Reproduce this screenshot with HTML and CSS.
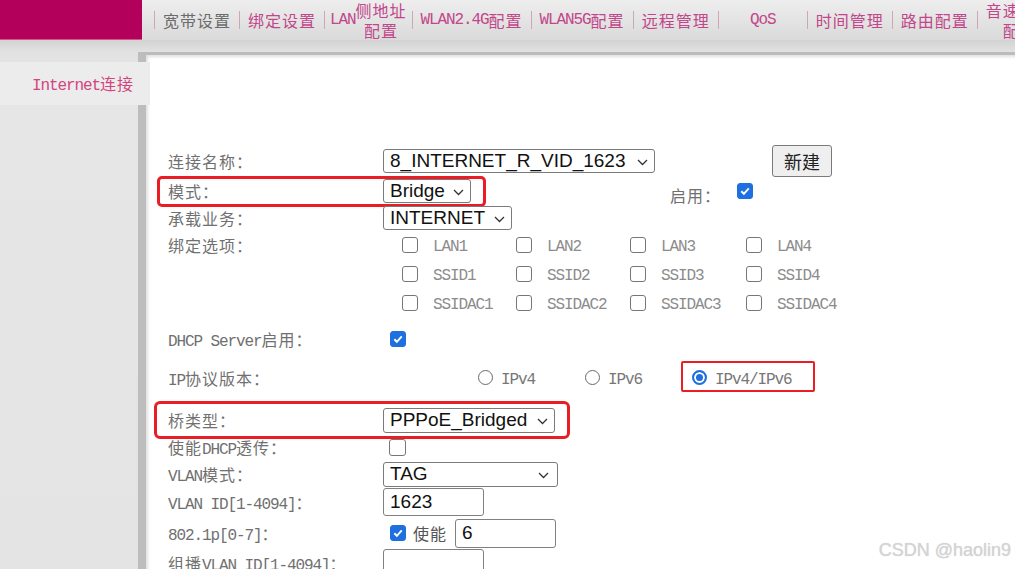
FILE: index.html
```html
<!DOCTYPE html>
<html lang="zh-CN">
<head>
<meta charset="utf-8">
<title>Internet连接</title>
<link rel="stylesheet" href="styles.css">
</head>
<body>
<div class="page">
  <header class="top">
    <div class="logo"></div>
    <nav class="nav">
      <a class="item active">宽带设置</a>
      <a class="item">绑定设置</a>
      <a class="item two"><span class="en">LAN</span>侧地址<br>配置</a>
      <a class="item"><span class="en">WLAN2.4G</span>配置</a>
      <a class="item"><span class="en">WLAN5G</span>配置</a>
      <a class="item">远程管理</a>
      <a class="item qos"><span class="en">QoS</span></a>
      <a class="item">时间管理</a>
      <a class="item">路由配置</a>
      <a class="item two last">音速通道<br>配置</a>
    </nav>
  </header>

  <div class="body">
    <aside class="side">
      <div class="tab"><span class="en">Internet</span>连接</div>
    </aside>

    <main class="main">
      <div class="form">
        <div class="row h32">
          <div class="label">连接名称：</div>
          <div class="ctrl">
            <div class="select w272"><span>8_INTERNET_R_VID_1623</span><svg class="chev" width="11" height="7" viewBox="0 0 11 7"><path d="M1 1l4.5 4.5L10 1" fill="none" stroke="#333" stroke-width="1.3"/></svg></div>
            <button class="btn">新建</button>
          </div>
        </div>

        <div class="row h28">
          <span class="mark mark1"></span>
          <div class="label">模式：</div>
          <div class="ctrl">
            <div class="select w88"><span>Bridge</span><svg class="chev" width="11" height="7" viewBox="0 0 11 7"><path d="M1 1l4.5 4.5L10 1" fill="none" stroke="#333" stroke-width="1.3"/></svg></div>
            <span class="enable">启用：</span>
            <span class="cb on"><svg viewBox="0 0 16 16"><path d="M3.8 8.3l2.9 2.9L12.3 5" fill="none" stroke="#fff" stroke-width="2.2"/></svg></span>
          </div>
        </div>

        <div class="row h26">
          <div class="label">承载业务：</div>
          <div class="ctrl">
            <div class="select w129"><span>INTERNET</span><svg class="chev" width="11" height="7" viewBox="0 0 11 7"><path d="M1 1l4.5 4.5L10 1" fill="none" stroke="#333" stroke-width="1.3"/></svg></div>
          </div>
        </div>

        <div class="row bind">
          <div class="label">绑定选项：</div>
          <div class="opts">
            <label class="opt"><span class="cb"></span><span class="en">LAN1</span></label>
            <label class="opt"><span class="cb"></span><span class="en">LAN2</span></label>
            <label class="opt"><span class="cb"></span><span class="en">LAN3</span></label>
            <label class="opt"><span class="cb"></span><span class="en">LAN4</span></label>
            <label class="opt"><span class="cb"></span><span class="en">SSID1</span></label>
            <label class="opt"><span class="cb"></span><span class="en">SSID2</span></label>
            <label class="opt"><span class="cb"></span><span class="en">SSID3</span></label>
            <label class="opt"><span class="cb"></span><span class="en">SSID4</span></label>
            <label class="opt"><span class="cb"></span><span class="en">SSIDAC1</span></label>
            <label class="opt"><span class="cb"></span><span class="en">SSIDAC2</span></label>
            <label class="opt"><span class="cb"></span><span class="en">SSIDAC3</span></label>
            <label class="opt"><span class="cb"></span><span class="en">SSIDAC4</span></label>
          </div>
        </div>

        <div class="row h28 mt7">
          <div class="label"><span class="en">DHCP Server</span>启用：</div>
          <div class="ctrl pad7">
            <span class="cb on"><svg viewBox="0 0 16 16"><path d="M3.8 8.3l2.9 2.9L12.3 5" fill="none" stroke="#fff" stroke-width="2.2"/></svg></span>
          </div>
        </div>

        <div class="row h32 mt9">
          <span class="mark mark2"></span>
          <div class="label"><span class="en">IP</span>协议版本：</div>
          <div class="ctrl radios">
            <label class="ropt"><span class="radio"></span><span class="en">IPv4</span></label>
            <label class="ropt"><span class="radio"></span><span class="en">IPv6</span></label>
            <label class="ropt"><span class="radio on"></span><span class="en">IPv4/IPv6</span></label>
          </div>
        </div>

        <div class="row h28 mt12">
          <span class="mark mark3"></span>
          <div class="label">桥类型：</div>
          <div class="ctrl">
            <div class="select w172 h25"><span>PPPoE_Bridged</span><svg class="chev" width="11" height="7" viewBox="0 0 11 7"><path d="M1 1l4.5 4.5L10 1" fill="none" stroke="#333" stroke-width="1.3"/></svg></div>
          </div>
        </div>

        <div class="row h26">
          <div class="label">使能<span class="en">DHCP</span>透传：</div>
          <div class="ctrl pad7">
            <span class="cb big"></span>
          </div>
        </div>

        <div class="row h28">
          <div class="label"><span class="en">VLAN</span>模式：</div>
          <div class="ctrl">
            <div class="select w175 h25 wide"><span>TAG</span><svg class="chev" width="11" height="7" viewBox="0 0 11 7"><path d="M1 1l4.5 4.5L10 1" fill="none" stroke="#333" stroke-width="1.3"/></svg></div>
          </div>
        </div>

        <div class="row h28">
          <div class="label"><span class="en">VLAN ID[1-4094]</span>：</div>
          <div class="ctrl">
            <div class="input">1623</div>
          </div>
        </div>

        <div class="row h30 mt2">
          <div class="label"><span class="en">802.1p[0-7]</span>：</div>
          <div class="ctrl pad7">
            <span class="cb on"><svg viewBox="0 0 16 16"><path d="M3.8 8.3l2.9 2.9L12.3 5" fill="none" stroke="#fff" stroke-width="2.2"/></svg></span>
            <span class="use">使能</span>
            <div class="input tall">6</div>
          </div>
        </div>

        <div class="row h28 mt1">
          <div class="label">组播<span class="en">VLAN ID[1-4094]</span>：</div>
          <div class="ctrl">
            <div class="input"></div>
          </div>
        </div>
      </div>
    </main>
  </div>

  <div class="watermark">CSDN @haolin9</div>
</div>
</body>
</html>
```

FILE: styles.css
```css
* { box-sizing: border-box; }

html, body {
  margin: 0;
  padding: 0;
  width: 1015px;
  height: 569px;
  overflow: hidden;
}

body {
  font-family: "Noto Sans CJK SC", "Liberation Sans", sans-serif;
  background: #e4e4e4;
}

.page {
  position: relative;
  width: 1015px;
  height: 569px;
  overflow: hidden;
}

.en {
  font-family: "Liberation Mono", monospace;
  font-size: 16px;
  letter-spacing: -1.1px;
}

/* ---------- top bar ---------- */
.top {
  display: flex;
  height: 40px;
  background: linear-gradient(#eeeeee, #dadada);
}

.logo {
  width: 142px;
  flex: none;
  background: #b3005b;
  border-bottom: 1px solid #d4548e;
}

.nav {
  display: flex;
  align-items: center;
  padding-left: 12px;
  overflow: hidden;
  white-space: nowrap;
}

.item {
  position: relative;
  display: flex;
  align-items: center;
  justify-content: center;
  text-align: center;
  height: 40px;
  padding: 0 8px 0 9px;
  font-size: 16px;
  letter-spacing: 1px;
  line-height: 20px;
  color: #c2468a;
  flex: none;
}

.item::before {
  content: "";
  position: absolute;
  left: 0;
  top: 11px;
  width: 1px;
  height: 18px;
  background: #cfa5b8;
}

.item.active { color: #6b6b6b; }
.item.two { padding: 0 5px 0 6px; }
.item.qos { width: 89px; }
.item.last { padding-left: 9px; }

/* ---------- body ---------- */
.body {
  display: flex;
  height: 529px;
  background: linear-gradient(#d2d2d2 0, #e2e2e2 12px, #e6e6e6 60px, #e4e4e4);
}

.side {
  width: 138px;
  flex: none;
}

.tab {
  position: relative;
  z-index: 1;
  width: 150px;
  height: 43px;
  margin-top: 22px;
  margin-right: -12px;
  background: #ececec;
  color: #d2457f;
  font-family: "Noto Sans CJK SC", sans-serif;
  font-size: 16px;
  letter-spacing: 1px;
  line-height: 43px;
  text-align: right;
  padding-right: 16px;
}

.main {
  flex: 1;
  margin-top: 12px;
  background: #ffffff;
  border-left: 8px solid #bdbdbd;
  border-top: 3px solid #bcbcbc;
  box-shadow: inset 2px 2px 3px rgba(0,0,0,0.12);
}

/* ---------- form ---------- */
.form {
  display: flex;
  flex-direction: column;
  padding: 90px 0 0 22px;
}

.row {
  position: relative;
  display: flex;
  align-items: center;
  flex: none;
}

.h26 { height: 26px; }
.h28 { height: 28px; }
.h30 { height: 30px; }
.h32 { height: 32px; }
.mt1 { margin-top: 1px; }
.mt2 { margin-top: 2px; }
.mt7 { margin-top: 7px; }
.mt9 { margin-top: 9px; }
.mt12 { margin-top: 12px; }

.label {
  width: 215px;
  flex: none;
  font-size: 16px;
  letter-spacing: 1px;
  color: #707070;
  white-space: nowrap;
}

.ctrl {
  display: flex;
  align-items: center;
}

.pad7 { padding-left: 7px; }

.select {
  display: flex;
  align-items: center;
  justify-content: space-between;
  height: 24px;
  padding: 0 6px 0 6px;
  border: 1px solid #7a7a7a;
  border-radius: 3px;
  background: #fff;
  font-family: "Liberation Sans", Arial, sans-serif;
  font-size: 19px;
  color: #111;
  line-height: 22px;
}

.select .chev { flex: none; margin-left: 6px; margin-top: 2px; }
.select.wide { padding-right: 8px; }

.w88 { width: 88px; }
.w129 { width: 129px; }
.w172 { width: 172px; }
.w175 { width: 175px; }
.w272 { width: 272px; }
.select.h25 { height: 25px; }

.btn {
  width: 60px;
  height: 32px;
  margin-left: 117px;
  padding: 0;
  border: 1px solid #7a7a7a;
  border-radius: 3px;
  background: #efefef;
  font-family: "Noto Sans CJK SC", sans-serif;
  font-size: 18px;
  color: #222;
}

.enable {
  margin-left: 199px;
  margin-top: 8px;
  width: 67px;
  font-size: 16px;
  letter-spacing: 1px;
  color: #707070;
}

.cb {
  display: inline-block;
  flex: none;
  width: 16px;
  height: 16px;
  border: 1px solid #767676;
  border-radius: 3px;
  background: #fff;
}

.cb.big { width: 17px; height: 17px; margin-left: -1px; }

.cb.on {
  border-color: #1e6fe0;
  background: #1e6fe0;
}

.cb svg { display: block; width: 14px; height: 14px; }

/* binding options */
.row.bind {
  height: 87px;
  align-items: flex-start;
}

.row.bind .label { line-height: 29px; }

.opts {
  display: grid;
  grid-template-columns: 114px 114px 116px 114px;
  grid-auto-rows: 29px;
  padding-left: 19px;
}

.opt {
  display: flex;
  align-items: center;
  gap: 15px;
}

.opt .cb { margin-top: -2px; }

.opt .en, .ropt .en {
  color: #8c8c8c;
  padding-top: 3px;
}

/* radios */
.radios { padding-left: 95px; }

.ropt {
  display: flex;
  align-items: center;
  gap: 8px;
  width: 107px;
}

.ropt .en { color: #777; }

.radio {
  display: inline-block;
  flex: none;
  width: 15px;
  height: 15px;
  border: 1px solid #6a6a6a;
  border-radius: 50%;
  background: #fff;
  margin-top: -2px;
}

.radio.on {
  border: 2px solid #1e6fe0;
  background: #1e6fe0;
  box-shadow: inset 0 0 0 2px #fff;
}

/* inputs */
.input {
  width: 101px;
  height: 28px;
  padding: 0 6px;
  border: 1px solid #808080;
  border-radius: 3px;
  background: #fff;
  font-family: "Liberation Sans", Arial, sans-serif;
  font-size: 19px;
  line-height: 26px;
  color: #111;
}

.input.tall { height: 29px; }

.use {
  margin-left: 7px;
  width: 42px;
  font-size: 16px;
  letter-spacing: 1px;
  color: #555;
}

/* red annotation boxes */
.mark {
  position: absolute;
  border: 3px solid #ea1c24;
  pointer-events: none;
}

.mark1 { left: -11px; top: -1px; width: 329px; height: 31px; border-radius: 5px; }
.mark2 { left: 513px; top: -1px; width: 134px; height: 31px; border-width: 2px; border-radius: 2px; }
.mark3 { left: -14px; top: -5px; width: 416px; height: 38px; border-radius: 6px; }

/* watermark */
.watermark {
  position: absolute;
  right: 4px;
  bottom: 8px;
  font-family: "Liberation Sans", Arial, sans-serif;
  font-size: 18px;
  color: #d4d4d4;
  text-shadow: 0 0 1px rgba(0,0,0,0.18);
}
```
